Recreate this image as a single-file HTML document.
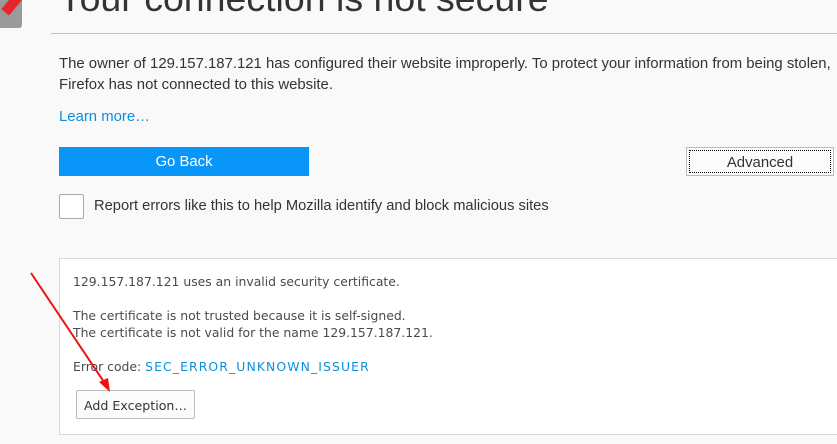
<!DOCTYPE html>
<html><head><style>
body{margin:0;width:837px;height:444px;background:#f9f9fa;font-family:"Liberation Sans",sans-serif;color:#333;position:relative;overflow:hidden}
.a{position:absolute}
</style></head><body>
<div class="a" style="left:-8px;top:-14px;width:30px;height:42px;background:#9a9a9a;border-radius:3px;overflow:hidden">
<div class="a" style="left:6px;top:6px;width:40px;height:10px;background:#e8252c;transform:rotate(-50deg)"></div></div>
<div class="a" style="left:58px;top:-23px;font-size:37.5px;color:#333;white-space:nowrap">Your connection is not secure</div>
<div class="a" style="left:51px;top:33px;width:790px;height:1px;background:#c0c0c0"></div>
<div class="a" style="left:59px;top:54px;font-size:14.9px;line-height:21px;width:790px">The owner of 129.157.187.121 has configured their website improperly. To protect your information from being stolen, Firefox has not connected to this website.</div>
<div class="a" style="left:59px;top:109px;font-size:14.9px;color:#0a8fdc">Learn more…</div>
<div class="a" style="left:59px;top:147px;width:250px;height:29px;background:#0996f8;color:#fff;font-size:14.9px;text-align:center;line-height:31px">Go Back</div>
<div class="a" style="left:686px;top:147px;width:146px;height:27px;border:1px solid #bbb;background:#fbfbfb;font-size:14.9px;text-align:center;line-height:30px"><div class="a" style="left:2px;top:2px;right:2px;bottom:2px;border:1px dotted #000"></div>Advanced</div>
<div class="a" style="left:59px;top:194px;width:23px;height:23px;border:1px solid #aaa;background:#fff;border-radius:2px"></div>
<div class="a" style="left:94px;top:198px;font-size:14.7px">Report errors like this to help Mozilla identify and block malicious sites</div>
<div class="a" style="left:59px;top:258px;width:800px;height:175px;border:1px solid #d6d6d6;background:#fff;font-family:'DejaVu Sans',sans-serif;font-size:12.4px;color:#4a4a4f">
<div class="a" style="left:13px;top:15px">129.157.187.121 uses an invalid security certificate.</div>
<div class="a" style="left:13px;top:48px;line-height:17px">The certificate is not trusted because it is self-signed.<br>The certificate is not valid for the name 129.157.187.121.</div>
<div class="a" style="left:13px;top:100px">Error code: <span style="color:#0a8fdc;letter-spacing:1.1px">SEC_ERROR_UNKNOWN_ISSUER</span></div>
<div class="a" style="left:16px;top:131px;width:117px;height:27px;border:1px solid #bbb;background:#fbfbfb;border-radius:2px;text-align:center;line-height:29px;color:#333;font-size:12.6px">Add Exception…</div>
</div>
<svg class="a" style="left:0;top:0" width="837" height="444"><line x1="31" y1="273" x2="106" y2="385" stroke="#f01010" stroke-width="2"/><polygon points="110,392 99,382 108,378" fill="#f01010"/></svg>
</body></html>
